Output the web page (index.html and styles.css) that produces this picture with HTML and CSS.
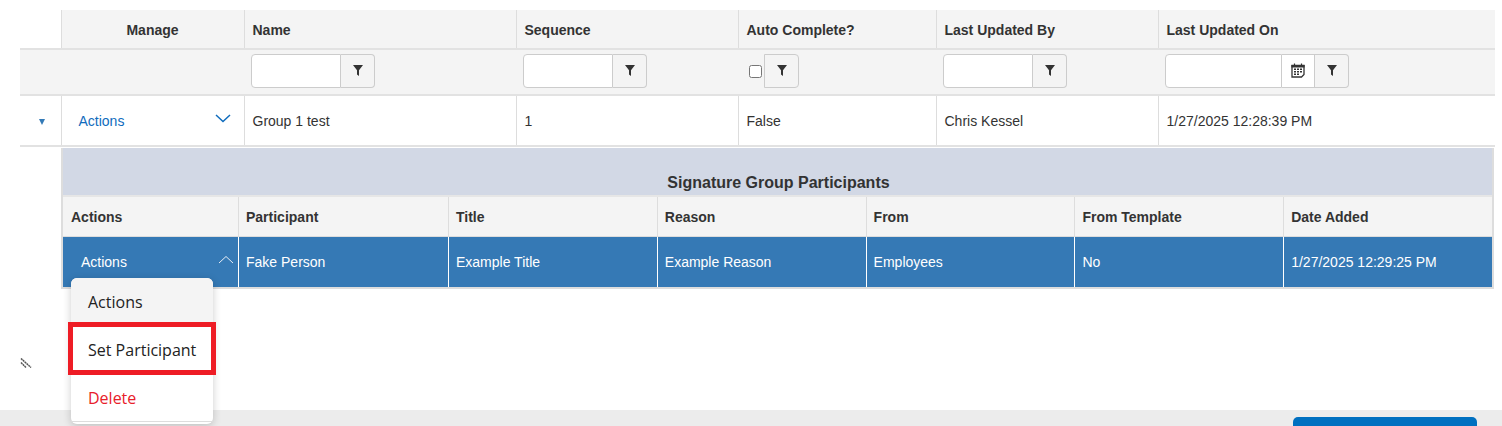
FILE: index.html
```html
<!DOCTYPE html>
<html lang="en">
  <head>
    <meta charset="UTF-8" />
    <title>Signature Groups</title>
    <link rel="stylesheet" href="styles.css">
  </head>
  <body>
    <svg class="svg-defs" width="0" height="0">
      <symbol id="funnel" viewBox="0 0 12 12"><path d="M1 1h10L7 6.200V12L5 10.500V6.200z" fill="#333" /></symbol>
    </svg>
    <main class="content">
      <table class="grid">
        <colgroup>
          <col class="c-toggle" /><col class="c-manage" /><col class="c-name" /><col class="c-seq" />
          <col class="c-auto" /><col class="c-by" /><col class="c-on" />
        </colgroup>
        <thead>
          <tr class="head-row">
            <th class="no-fill"></th>
            <th class="center">Manage</th>
            <th>Name</th>
            <th>Sequence</th>
            <th>Auto Complete?</th>
            <th>Last Updated By</th>
            <th>Last Updated On</th>
          </tr>
          <tr class="filter-row">
            <td colspan="2"></td>
            <td>
              <div class="filter"><input class="filter-input w-90" type="text" /><button class="filter-btn"><svg width="12" height="12"><use href="#funnel" /></svg></button></div>
            </td>
            <td>
              <div class="filter"><input class="filter-input w-90" type="text" /><button class="filter-btn"><svg width="12" height="12"><use href="#funnel" /></svg></button></div>
            </td>
            <td>
              <div class="filter-check"><input class="check" type="checkbox" /><button class="filter-btn solo"><svg width="12" height="12"><use href="#funnel" /></svg></button></div>
            </td>
            <td>
              <div class="filter"><input class="filter-input w-90" type="text" /><button class="filter-btn"><svg width="12" height="12"><use href="#funnel" /></svg></button></div>
            </td>
            <td>
              <div class="filter">
                <input class="filter-input w-117" type="text" />
                <button class="filter-btn cal">
                  <svg width="14" height="15" viewBox="0 0 14 15">
                    <path d="M1 2.500h12v9L10.500 14H1z" fill="#fff" stroke="#333" stroke-width="1.300" />
                    <path d="M1 2.500h12V4H1zM3.500 0.500v2M10.500 0.500v2" stroke="#333" stroke-width="1.200" fill="#333" />
                    <path d="M3 5.500h2V7H3zM6 5.500h2V7H6zM9 5.500h2V7H9zM3 8h2v1.500H3zM6 8h2v1.500H6zM9 8h2v1.500H9zM3 10.500h2V12H3zM6 10.500h2V12H6z" fill="#333" />
                  </svg>
                </button>
                <button class="filter-btn"><svg width="12" height="12"><use href="#funnel" /></svg></button>
              </div>
            </td>
          </tr>
        </thead>
        <tbody>
          <tr class="data-row">
            <td class="toggle"><span class="caret"></span></td>
            <td class="actions">
              <span class="actions-cell">
                <span>Actions</span>
                <svg width="16" height="9" viewBox="0 0 16 9"><path d="M1 1l7 6.500L15 1" fill="none" stroke="#0f6cbd" stroke-width="1.500" /></svg>
              </span>
            </td>
            <td>Group 1 test</td>
            <td>1</td>
            <td>False</td>
            <td>Chris Kessel</td>
            <td>1/27/2025 12:28:39 PM</td>
          </tr>
          <tr class="detail-row">
            <td></td>
            <td colspan="6" class="detail-cell">
              <div class="detail">
                <div class="detail-title">Signature Group Participants</div>
                <table class="subgrid">
                  <thead>
                    <tr>
                      <th class="sub-first">Actions</th>
                      <th class="sub-second">Participant</th>
                      <th>Title</th>
                      <th>Reason</th>
                      <th>From</th>
                      <th>From Template</th>
                      <th>Date Added</th>
                    </tr>
                  </thead>
                  <tbody>
                    <tr class="selected">
                      <td class="sub-actions">
                        <span class="actions-cell">
                          <span>Actions</span>
                          <svg width="16" height="9" viewBox="0 0 16 9"><path d="M1 8l7-6.500L15 8" fill="none" stroke="#e8eef6" stroke-width="1" /></svg>
                        </span>
                      </td>
                      <td>Fake Person</td>
                      <td>Example Title</td>
                      <td>Example Reason</td>
                      <td>Employees</td>
                      <td>No</td>
                      <td>1/27/2025 12:29:25 PM</td>
                    </tr>
                  </tbody>
                </table>
              </div>
            </td>
          </tr>
        </tbody>
      </table>
      <svg class="resize-grip" width="12" height="10" viewBox="0 0 12 10">
        <path d="M1 0.500L11 9.500M1 4.500L6 9.500" fill="none" stroke="#555" stroke-width="1.500" stroke-dasharray="2 0.500" />
      </svg>
      <ul class="menu">
        <li class="menu-item hovered">Actions</li>
        <li class="menu-item marked">Set Participant</li>
        <li class="menu-item danger">Delete</li>
      </ul>
    </main>
    <footer class="footer">
      <button class="primary-btn"></button>
    </footer>
  </body>
</html>
```

FILE: styles.css
```css
/* Layout */
html,
body {
  margin: 0;
  padding: 0;
  height: 426px;
  overflow: hidden;
  background: #fff;
  font-family: "Liberation Sans", Arial, sans-serif;
  font-size: 14px;
  color: #333;
}
.svg-defs {
  display: block;
  height: 0;
}
.content {
  position: relative;
  height: 410px;
  padding: 10px 7px 0 20px;
  box-sizing: border-box;
}

/* Main grid */
.grid {
  width: 1475px;
  table-layout: fixed;
  border-collapse: collapse;
}
.c-toggle { width: 41px; }
.c-manage { width: 183px; }
.c-name { width: 272px; }
.c-seq { width: 222px; }
.c-auto { width: 198px; }
.c-by { width: 222px; }
.c-on { width: 337px; }

.grid > thead > .head-row > th {
  height: 39px;
  padding: 1px 8px 0;
  background: #f4f4f4;
  border-left: 1px solid #ddd;
  border-bottom: 2px solid #e2e2e2;
  text-align: left;
  font-weight: bold;
  box-sizing: border-box;
}
.grid > thead > .head-row > th.no-fill {
  background: #fff;
  border-left: none;
}
.grid > thead > .head-row > th.center {
  text-align: center;
}
.filter-row td {
  height: 46px;
  padding: 0 7px 2px;
  background: #f4f4f4;
  border-bottom: 2px solid #e2e2e2;
  box-sizing: border-box;
}

/* Filters */
.filter,
.filter-check {
  display: flex;
  align-items: stretch;
  height: 34px;
  width: max-content;
}
.filter-check {
  align-items: center;
}
.filter-input {
  height: 34px;
  padding: 0;
  box-sizing: border-box;
  border: 1px solid #ccc;
  border-radius: 4px 0 0 4px;
  background: #fff;
}
.w-90 { width: 90px; }
.w-117 { width: 117px; }
.filter-btn {
  display: flex;
  align-items: center;
  justify-content: center;
  width: 34px;
  height: 34px;
  padding: 0 0 2px;
  box-sizing: border-box;
  background: #f4f4f4;
  border: 1px solid #ccc;
  border-left: none;
  border-radius: 0 4px 4px 0;
}
.filter-btn.cal {
  width: 33px;
  background: #fff;
  border-radius: 0;
}
.filter-btn.solo {
  border-left: 1px solid #ccc;
  border-radius: 0 4px 4px 0;
  width: 35px;
}
.check {
  width: 13px;
  height: 13px;
  margin: 0 2px 0 4px;
}

/* Rows */
.data-row td {
  height: 51px;
  padding: 1px 8px 0;
  border-left: 1px solid #ddd;
  border-bottom: 2px solid #e2e2e2;
  box-sizing: border-box;
}
.data-row td.toggle {
  border-left: none;
  text-align: center;
  padding: 0 0 0 3px;
}
.caret {
  display: inline-block;
  border-top: 6px solid #337ab7;
  border-left: 3.500px solid transparent;
  border-right: 3.500px solid transparent;
  vertical-align: 1px;
}
.data-row td.actions {
  padding: 0 13px 0 17px;
  color: #0f6cbd;
}
.actions-cell {
  display: flex;
  align-items: center;
  justify-content: space-between;
}
.actions-cell svg {
  margin-bottom: 4px;
}

/* Detail grid */
.detail-cell {
  padding: 1px 1px 0 0;
}
.detail {
  border: 1px solid #ddd;
  border-width: 0 2px 2px 2px;
}
.detail-title {
  height: 49px;
  padding: 26px 0 0 2px;
  box-sizing: border-box;
  background: #d2d8e5;
  border-bottom: 2px solid #e6e6e6;
  text-align: center;
  font-size: 16px;
  font-weight: bold;
  line-height: 18px;
}
.subgrid {
  width: 100%;
  table-layout: fixed;
  border-collapse: separate;
  border-spacing: 0;
}
.subgrid th {
  height: 40px;
  padding: 0 7px;
  background: #f4f4f4;
  border-left: 1px solid #ddd;
  border-bottom: 1px solid #ddd;
  box-sizing: border-box;
  text-align: left;
}
.subgrid th.sub-first {
  width: 175px;
  padding-left: 8px;
  border-left: none;
}
.subgrid th.sub-second {
  width: 210px;
}
.selected td {
  height: 50px;
  padding: 0 7px;
  background: #3579b5;
  color: #fff;
  border-left: 1px solid #fff;
  box-sizing: border-box;
}
.selected td.sub-actions {
  padding: 0 4px 0 18px;
  border-left: none;
}
.selected .actions-cell svg {
  margin-bottom: 6px;
}

/* Resize grip */
.resize-grip {
  display: block;
  margin-top: 69px;
}

/* Actions menu */
.menu {
  position: absolute;
  top: 278px;
  left: 71px;
  width: 142px;
  height: 146px;
  margin: 0;
  padding: 0;
  list-style: none;
  background: #fff;
  border-radius: 6px;
  box-shadow: 0 2px 8px rgba(0, 0, 0, 0.2);
  font-family: "Open Sans", "Noto Sans", sans-serif;
  font-size: 16px;
}
.menu-item {
  height: 47px;
  padding-left: 17px;
  color: #222;
}
.menu-item.hovered {
  line-height: 48px;
  background: #f4f4f4;
  border-radius: 6px 6px 0 0;
}
.menu-item.marked {
  line-height: 50px;
  outline: 5px solid #ee1c25;
  outline-offset: -2px;
}
.menu-item.danger {
  height: 49px;
  line-height: 52px;
  color: #e8202a;
  border-bottom: 1px solid #ddd;
}

/* Footer */
.footer {
  display: flex;
  justify-content: flex-end;
  height: 16px;
  padding: 7px 25px 0 0;
  box-sizing: border-box;
  background: #ececec;
  overflow: hidden;
}
.primary-btn {
  width: 184px;
  height: 40px;
  flex: none;
  border: none;
  border-radius: 5px;
  background: #0070c0;
}
```
